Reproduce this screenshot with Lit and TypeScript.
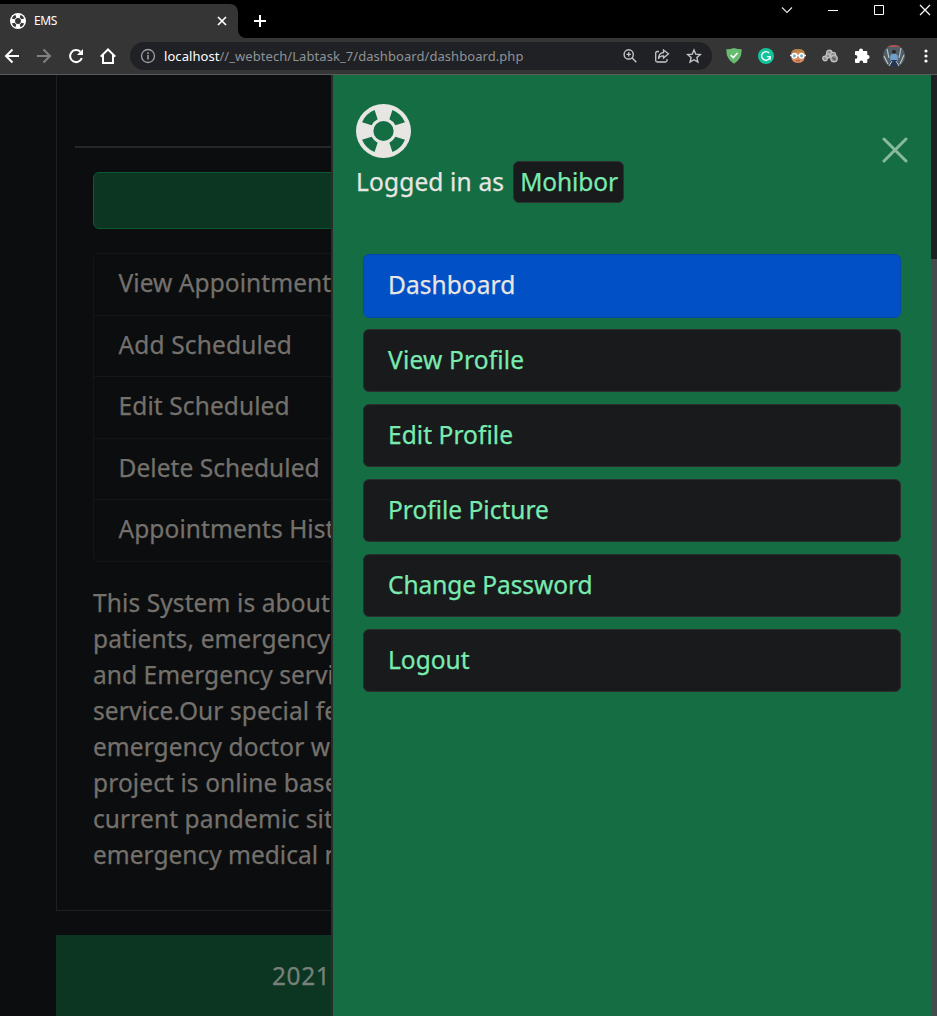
import { LitElement, html, css, svg } from "lit";
import { customElement } from "lit/decorators.js";
import { styleMap } from "lit/directives/style-map.js";

const hole = "M10.6 1.75A6.75 6.75 0 0 1 14.25 5.4L11.45 6.3A3.9 3.9 0 0 0 9.7 4.55z";
const buoy = svg`<circle cx="8" cy="8" r="8" fill="currentColor"/>
<g fill="var(--hole)"><circle cx="8" cy="8" r="2.95"/>
${[0, 90, 180, 270].map((a) => svg`<path transform="rotate(${a} 8 8)" d=${hole}/>`)}</g>`;

@customElement("browser-bar")
export class BrowserBar extends LitElement {
  static styles = css`
    :host { display: block; height: 75px; background: #000; color: #fff; font-family: "Noto Sans", "Open Sans", sans-serif; }
    svg { display: block; flex: none; }
    .tabs { display: flex; height: 38px; }
    .tab { display: flex; align-items: center; box-sizing: border-box; width: 238px; height: 34px; margin-top: 4px; padding: 0 10px; background: #353535; border-radius: 0 8px 0 0; font-size: 12px; --hole: #353535; }
    .name { flex: 1; padding-left: 8px; font-size: 12px; letter-spacing: -0.35px; }
    .curve { margin-top: 30px; }
    .plus { margin: 15px 0 0 8px; }
    .windows { display: flex; margin-left: auto; padding: 4px 6px 0 0; gap: 34px; height: 12px; }
    .tools { display: flex; align-items: center; height: 36px; background: #353535; border-bottom: 1px solid #5b5b5b; padding-left: 4px; }
    .nav { display: flex; gap: 16px; width: 126px; }
    .address { display: flex; align-items: center; box-sizing: border-box; width: 582px; height: 28px; border-radius: 14px; background: #202124; padding: 0 10px; }
    .url { flex: 1; padding-left: 8px; font-size: 13px; white-space: nowrap; color: #8f9398; letter-spacing: 0.06px; }
    .host { color: #fff; }
    .actions { display: flex; gap: 16px; }
    .extensions { display: flex; align-items: center; gap: 16px; padding-left: 14px; }
    .avatar { margin-left: -3px; }
    .dots { margin-left: 3px; }
  `;
  render() {
    return html`
      <div class="tabs">
        <div class="tab">
          <svg width="16" height="16" viewBox="0 0 16 16">${buoy}</svg>
          <span class="name">EMS</span>
          <svg width="12" height="12" viewBox="0 0 12 12" stroke="#fff" stroke-width="1.7"><path d="M2 2l8 8M10 2l-8 8"/></svg>
        </div>
        <svg class="curve" width="8" height="8" viewBox="0 0 8 8"><path d="M0 0v8h8a8 8 0 0 1-8-8" fill="#353535"/></svg>
        <svg class="plus" width="12" height="12" viewBox="0 0 12 12" stroke="#fff" stroke-width="2"><path d="M6 0v12M0 6h12"/></svg>
        <div class="windows">
          <svg width="12" height="12" viewBox="0 0 12 12" fill="none" stroke="#e8e8e8" stroke-width="1.1"><path d="M1 3.5l5 5 5-5"/></svg>
          <svg width="12" height="12" viewBox="0 0 12 12" stroke="#fff"><path d="M1 6.5h10"/></svg>
          <svg width="12" height="12" viewBox="0 0 12 12" fill="none" stroke="#fff"><path d="M1.5 1.5h9v9h-9z"/></svg>
          <svg width="12" height="12" viewBox="0 0 12 12" stroke="#fff" stroke-width="1.2"><path d="M1 1l10 10M11 1L1 11"/></svg>
        </div>
      </div>
      <div class="tools">
        <div class="nav">
          <svg width="16" height="16" viewBox="0 0 16 16" fill="none" stroke="#fff" stroke-width="2"><path d="M15 8H2.5M8.500 1.500L2 8l6.500 6.500"/></svg>
          <svg width="16" height="16" viewBox="0 0 16 16" fill="none" stroke="#818181" stroke-width="2"><path d="M1 8h12.500M7.500 1.500L14 8l-6.500 6.500"/></svg>
          <svg width="16" height="16" viewBox="0 0 16 16"><path d="M13.800 10A6 6 0 1 1 12.300 3.800" fill="none" stroke="#fff" stroke-width="2"/><path d="M15 1v6H9z" fill="#fff"/></svg>
          <svg width="16" height="16" viewBox="0 0 16 16" fill="none" stroke="#fff" stroke-width="2"><path d="M.7 8.600L8 1.500l7.300 7.100M3 7v8h10V7"/></svg>
        </div>
        <div class="address">
          <svg width="16" height="16" viewBox="0 0 16 16" fill="none" stroke="#9aa0a6" stroke-width="1.300"><circle cx="8" cy="8" r="6.500"/><path d="M8 7v4.500M8 4.300v1.600" stroke-width="1.600"/></svg>
          <span class="url"><span class="host">localhost</span>//_webtech/Labtask_7/dashboard/dashboard.php</span>
          <div class="actions">
            <svg width="16" height="16" viewBox="0 0 16 16" fill="none" stroke="#c4c7c9" stroke-width="1.400"><circle cx="6.700" cy="6.400" r="4.600"/><path d="M10 9.800l4.300 4.400M4.500 6.400h4.400M6.700 4.200v4.400"/></svg>
            <svg width="16" height="16" viewBox="0 0 16 16" fill="none" stroke="#c4c7c9" stroke-width="1.300"><path d="M5 3.500H3.200Q1.700 3.500 1.700 5v7.500Q1.700 14 3.200 14h8.300q1.500 0 1.500-1.500V11M4.500 11q.5-3 5-3.200V10l5-4.300-5-3.700v2.600Q4.500 5 4.500 11z"/></svg>
            <svg width="16" height="16" viewBox="0 0 16 16" fill="none" stroke="#c4c7c9" stroke-width="1.400"><path d="M8 2l1.800 4.200 4.500.4-3.400 3 1 4.400L8 11.700 4.100 14l1-4.400-3.400-3 4.500-.4z"/></svg>
          </div>
        </div>
        <div class="extensions">
          <svg width="16" height="18" viewBox="0 0 16 18"><path d="M8 1Q4.500 2.300.4 2.300-.2 12 8 16.800 16.200 12 15.600 2.300 11.500 2.300 8 1z" fill="#68bc71"/><path d="M4.700 7.900l2.600 2.700 4.200-4.700" fill="none" stroke="#fff" stroke-width="1.500"/></svg>
          <svg width="16" height="16" viewBox="0 0 16 16"><circle cx="8" cy="8" r="8" fill="#15c39a"/><path d="M11.300 5.200A4.300 4.300 0 1 0 12.200 8.700H9.200M12.100 8.500v3.200" fill="none" stroke="#fff" stroke-width="1.300"/></svg>
          <svg width="16" height="16" viewBox="0 0 16 16"><path d="M1.200 7Q1 1 8 1t6.800 6q.2 8-6.800 8T1.200 7z" fill="#d58c62"/><path d="M1.200 6.500Q1 1 8 1t6.800 5.500L12 4.200 7 3.500z" fill="#b58145"/><path d="M0 7.500h16" stroke="#eee" stroke-width="1.500"/><circle cx="4.400" cy="7.800" r="2.300" fill="#7fb6c8" stroke="#fff" stroke-width="1.400"/><circle cx="11.600" cy="7.800" r="2.300" fill="#7fb6c8" stroke="#fff" stroke-width="1.400"/><path d="M6 12.500q2 1 4 0" fill="none" stroke="#b5522f"/></svg>
          <svg width="16" height="16" viewBox="0 0 16 16" fill="#8a8a8a" stroke="#bdbdbd" stroke-width="1.400"><circle cx="3" cy="10.500" r="2.200"/><circle cx="7.300" cy="5" r="2.700"/><circle cx="6" cy="8" r="2"/><circle cx="11" cy="7" r="2.600"/><circle cx="12" cy="10.600" r="3.200"/><path d="M10.500 9.500l3 2.500" stroke="#555"/></svg>
          <svg width="16" height="16" viewBox="0 0 16 16" fill="#fff"><path d="M5 3V2.600a2 2 0 0 1 4 0V3h3.300q1 0 1 1v3h.3a2 2 0 0 1 0 4h-.3v3q0 1-1 1H9.200v-.5a1.900 1.900 0 0 0-3.800 0v.5H2q-1 0-1-1v-3.200h.5a1.900 1.900 0 0 0 0-3.800H1V4q0-1 1-1z"/></svg>
          <svg class="avatar" width="22" height="22" viewBox="0 0 22 22"><defs><clipPath id="av"><circle cx="11" cy="11" r="11"/></clipPath></defs><g clip-path="url(#av)"><path fill="#505d65" d="M0 0h22v22H0z"/><path d="M4 0h14v2H4z" fill="#b4534f"/><path d="M4 4l2 9M18 3l-2 10M1 11l4 8M21 10l-4 9" stroke="#b8c2c6" stroke-width="1.200"/><path d="M7.500 10l3.500-2 3.500 2 .5 6H7z" fill="#6e9fce"/><circle cx="11" cy="6.800" r="1.900" fill="#2b2023"/><path d="M8 15h6l2 7H6z" fill="#253451"/><path d="M9 16l-3 5M13 16l3 5" stroke="#c9d0d4"/></g></svg>
          <svg class="dots" width="4" height="16" viewBox="0 0 4 16" fill="#fff"><circle cx="2" cy="3" r="1.600"/><circle cx="2" cy="8" r="1.600"/><circle cx="2" cy="13" r="1.600"/></svg>
        </div>
      </div>`;
  }
}

const links: [string, number][] = [["View Appointments", 0.07], ["Add Scheduled", 0.14], ["Edit Scheduled", 0.1], ["Delete Scheduled", 0.04], ["Appointments History", 0.07]];
const about: [string, number][] = [
  ["This System is about", 0.1], ["patients, emergency", 0.12], ["and Emergency service", 0.07], ["service.Our special feature", 0.07],
  ["emergency doctor with", 0.05], ["project is online based", 0.1], ["current pandemic situation", 0.1], ["emergency medical needs", 0],
];
const menu: [string, number][] = [["Dashboard", 0.05], ["View Profile", 0.18], ["Edit Profile", 0.06], ["Profile Picture", 0], ["Change Password", -0.07], ["Logout", 0]];

const spaced = ([text, gap]: [string, number]) => html`<span style=${styleMap({ letterSpacing: gap + "px" })}>${text}</span>`;

@customElement("app-root")
export class AppRoot extends LitElement {
  static styles = css`
    :host { display: block; width: 937px; height: 1016px; overflow: hidden; background: #0c0d0f; font: 24.5px/36px "Noto Sans", "Open Sans", sans-serif; -webkit-text-stroke: 0.25px; }
    browser-bar { -webkit-text-stroke: 0; }
    .view { position: relative; height: 941px; overflow: hidden; }
    .page { height: 941px; padding: 0 56px; color: #74716c; white-space: nowrap; }
    .card { box-sizing: border-box; height: 836px; border: solid #1e1f21; border-width: 0 1px 1px; padding: 71px 18px 0; }
    .rule { height: 2px; background: #252628; }
    .content { padding: 24px 18px 0; }
    .alert { box-sizing: border-box; height: 57px; border: 1px solid #0b5a35; border-radius: 6px; background: #0c3522; }
    .list { margin-top: 24px; border: 1px solid #151617; border-radius: 6px; }
    .entry { box-sizing: border-box; height: 61.5px; padding: 11px 24px 0 24.5px; border-bottom: 1px solid #151617; }
    .entry:last-child { border-bottom: 0; height: 61px; }
    .about { padding-top: 22.5px; }
    .line { height: 36px; }
    .footer { box-sizing: border-box; height: 81px; margin-top: 24px; padding: 23px 0 0 216px; background: #0c3522; color: #78807a; }
    .drawer { position: absolute; left: 331px; top: 0; width: 600px; height: 941px; box-sizing: border-box; border-left: 2px solid #2a2c2c; background: #156e43; --hole: #156e43; color: #e8e6e3; }
    .head { display: flex; height: 155px; padding: 29px 23px 0; box-sizing: border-box; justify-content: space-between; }
    .logo { display: block; }
    .who { display: flex; align-items: center; gap: 9px; margin-top: 3px; height: 42px; white-space: nowrap; }
    .badge { box-sizing: border-box; width: 111px; height: 42px; padding: 2px 6px 0; border: 1px solid #2d302f; border-radius: 6px; background: #181a1b; color: #79ebb1; }
    .close { margin-top: 33px; }
    .menu { display: flex; flex-direction: column; gap: 12px; padding: 24px 30px; }
    .item { box-sizing: border-box; height: 63px; padding: 12px 24px 0; border: 1px solid #2a302e; border-radius: 6px; background: #181a1b; color: #79ebb1; }
    .active { background: #0250c5; border-color: #0848aa; color: #e8e6e3; height: 64px; margin-bottom: -1px; }
    .scroll { position: absolute; right: 0; top: 0; width: 6px; height: 941px; background: #454a4d; }
    .track { height: 184px; background: #1e2124; }
  `;
  render() {
    return html`
      <browser-bar></browser-bar>
      <div class="view">
        <div class="page">
          <div class="card">
            <div class="rule"></div>
            <div class="content">
              <div class="alert"></div>
              <div class="list">${links.map((l) => html`<div class="entry">${spaced(l)}</div>`)}</div>
              <div class="about">${about.map((l) => html`<div class="line">${spaced(l)}</div>`)}</div>
            </div>
          </div>
          <div class="footer">${spaced(["2021", 0.6])}</div>
        </div>
        <div class="drawer">
          <div class="head">
            <div>
              <svg class="logo" width="55" height="54" viewBox="0 0 16 16" preserveAspectRatio="none">${buoy}</svg>
              <div class="who">${spaced(["Logged in as", 0.15])}<span class="badge">${spaced(["Mohibor", -0.1])}</span></div>
            </div>
            <svg class="close" width="26" height="26" viewBox="0 0 26 26" stroke="#8ab9a1" stroke-width="3" stroke-linecap="round"><path d="M2 2l22 22M24 2L2 24"/></svg>
          </div>
          <div class="menu">${menu.map((m, i) => html`<div class="item ${i === 0 ? "active" : ""}">${spaced(m)}</div>`)}</div>
        </div>
        <div class="scroll"><div class="track"></div></div>
      </div>`;
  }
}
